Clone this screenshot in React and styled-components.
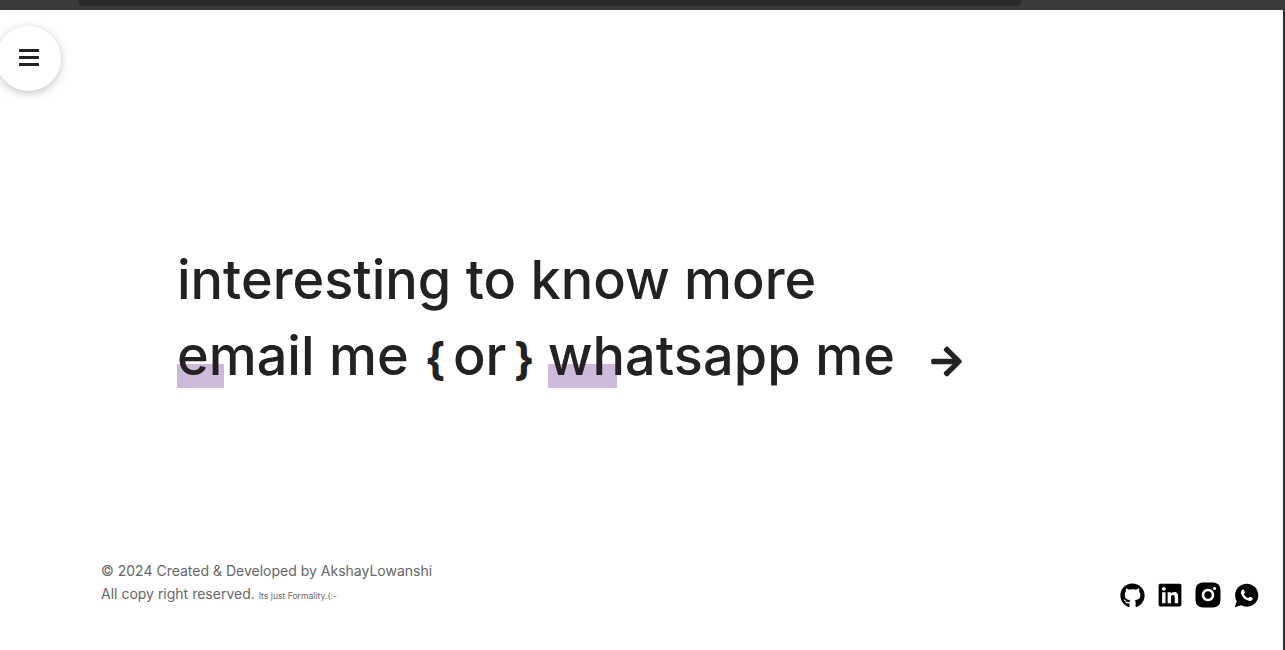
import styled, { createGlobalStyle } from "styled-components"
import { FaArrowRight, FaGithub, FaLinkedin } from "react-icons/fa"
import { RiInstagramFill } from "react-icons/ri"
import { IoLogoWhatsapp } from "react-icons/io"

const GlobalStyle = createGlobalStyle`
    html, body {
        margin: 0;
        padding: 0;
        background: #fff;
        overflow: hidden;
    }
`

const App = () => {
    return (
        <SPage>
            <GlobalStyle />
            <STopBar>
                <STopNotch />
            </STopBar>
            <SBody>
                <SContent>
                    <SMenuButton aria-label="menu">
                        <svg width="20" height="17" viewBox="0 0 20 17" fill="#222">
                            <rect y="0" width="20" height="3" rx="0.5" />
                            <rect y="7" width="20" height="3" rx="0.5" />
                            <rect y="14" width="20" height="3" rx="0.5" />
                        </svg>
                    </SMenuButton>
                    <SHero>
                        <SLine>interesting to know more</SLine>
                        <SLine>
                            <SLink $width={47}>email me</SLink>
                            <SBraces>
                                <SBrace>{"{"}</SBrace>
                                or
                                <SBrace>{"}"}</SBrace>
                            </SBraces>
                            <SLink $width={69} $wide>whatsapp me</SLink>
                            <SArrow>
                                <FaArrowRight size={35} />
                            </SArrow>
                        </SLine>
                    </SHero>
                    <SFooter>
                        <SCopy>
                            <SCopyLine>© 2024 Created &amp; Developed by AkshayLowanshi</SCopyLine>
                            <SCopyLine>
                                All copy right reserved. <SSmall>Its just Formality.(:-</SSmall>
                            </SCopyLine>
                        </SCopy>
                        <SSocials>
                            <SSocial><FaGithub size={25} /></SSocial>
                            <SSocial><FaLinkedin size={26} /></SSocial>
                            <SSocial><RiInstagramFill size={30} /></SSocial>
                            <SSocial><IoLogoWhatsapp size={27} /></SSocial>
                        </SSocials>
                    </SFooter>
                </SContent>
                <SScrollEdge />
            </SBody>
        </SPage>
    )
}

const SPage = styled.div`
    width: 1285px;
    height: 650px;
    display: flex;
    flex-direction: column;
    font-family: "Inter", "Lato", sans-serif;
    color: #222;
`

const STopBar = styled.div`
    height: 10px;
    flex-shrink: 0;
    background: #3b3b3b;
    padding: 0 263px 0 78px;
`

const STopNotch = styled.div`
    height: 6px;
    background: #292929;
    border-radius: 0 0 10px 10px;
`

const SBody = styled.div`
    flex: 1;
    display: flex;
    min-height: 0;
`

const SContent = styled.div`
    flex: 1;
    position: relative;
    display: flex;
    flex-direction: column;
`

const SScrollEdge = styled.div`
    width: 2px;
    background: #2e2e2e;
`

const SMenuButton = styled.button`
    position: absolute;
    left: -4px;
    top: 16px;
    width: 65px;
    height: 65px;
    border: none;
    border-radius: 50%;
    background: #fff;
    box-shadow: 0 2px 8px rgba(0, 0, 0, 0.25);
    display: flex;
    align-items: center;
    justify-content: center;
    padding: 0 0 3px 0;
`

const SHero = styled.div`
    padding: 232px 0 0 177px;
`

const SLine = styled.div`
    font-size: 54px;
    font-weight: 500;
    line-height: 76px;
    white-space: nowrap;
    display: flex;
    gap: 13px;
`

const SBraces = styled.span`
    width: 110px;
    margin-left: 3px;
    display: flex;
    justify-content: space-between;
    align-items: baseline;
`

const SBrace = styled.span`
    font-size: 44px;
    font-weight: 700;
`

const SLink = styled.span`
    position: relative;
    z-index: 0;
    letter-spacing: ${(p) => (p.$wide ? "0.1px" : "0")};

    &::before {
        content: "";
        position: absolute;
        z-index: -1;
        left: 0;
        top: 46px;
        height: 24px;
        width: ${(p) => p.$width}px;
        background: #cdb9d9;
    }
`

const SArrow = styled.span`
    display: inline-flex;
    align-items: center;
    margin-left: 21px;
    padding-top: 7px;
`

const SFooter = styled.div`
    margin-top: auto;
    display: flex;
    justify-content: space-between;
    align-items: flex-end;
    padding: 0 18px 40px 101px;
`

const SCopy = styled.div`
    color: #666;
    font-size: 14px;
    line-height: 23px;
    padding-bottom: 2px;
`

const SCopyLine = styled.div`
    white-space: nowrap;
`

const SSmall = styled.small`
    font-size: 8.6px;
`

const SSocials = styled.div`
    display: flex;
    color: #000;
`

const SSocial = styled.span`
    width: 38px;
    height: 30px;
    display: flex;
    align-items: center;
    justify-content: center;
`

export default App
